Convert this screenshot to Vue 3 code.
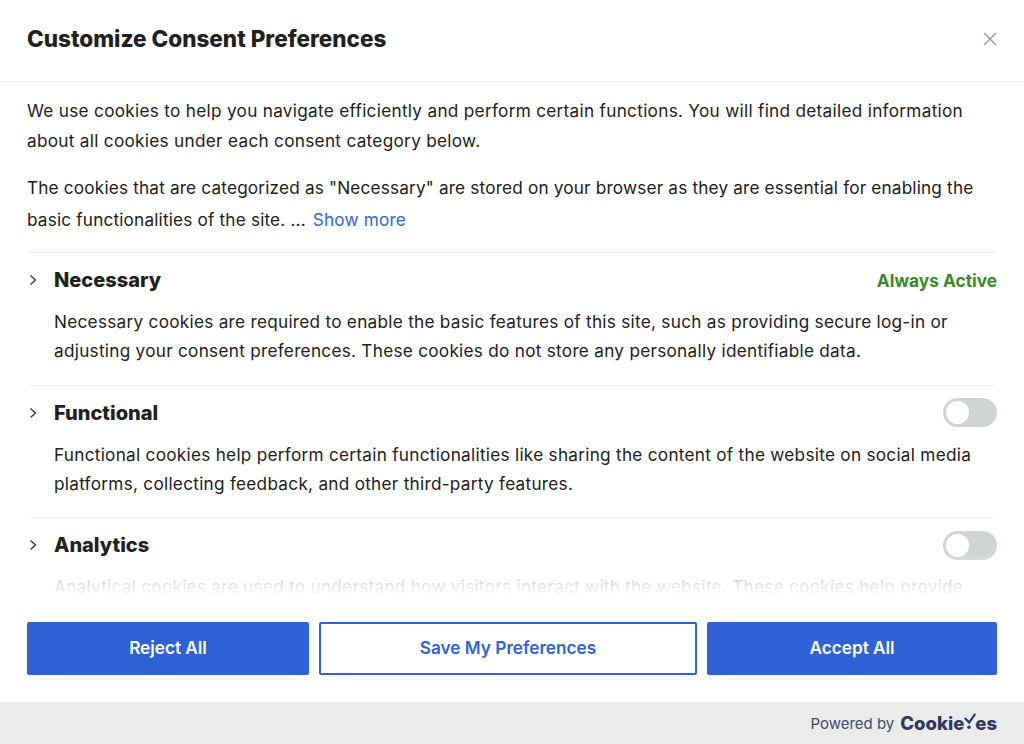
<script setup>
const items = [
  { name: 'Necessary', active: true, lines: ['Necessary cookies are required to enable the basic features of this site, such as providing secure log-in or', 'adjusting your consent preferences. These cookies do not store any personally identifiable data.'] },
  { name: 'Functional', active: false, lines: ['Functional cookies help perform certain functionalities like sharing the content of the website on social media', 'platforms, collecting feedback, and other third-party features.'] },
  { name: 'Analytics', active: false, lines: ['Analytical cookies are used to understand how visitors interact with the website. These cookies help provide'] },
]
</script>

<template>
  <div class="modal">
    <header class="head">
      <h1 class="title">Customize Consent Preferences</h1>
      <svg class="close" viewBox="0 0 14 14" aria-label="Close"><path d="M1 1L13 13M13 1L1 13" /></svg>
    </header>
    <main class="body">
      <div class="intro">
        <p class="para">We use cookies to help you navigate efficiently and perform certain functions. You will find detailed information<br>about all cookies under each consent category below.</p>
        <p class="para second">The cookies that are categorized as "Necessary" are stored on your browser as they are essential for enabling the<br>basic functionalities of the site. ... <a class="more">Show more</a></p>
      </div>
      <section v-for="item in items" :key="item.name" class="item">
        <div class="row">
          <svg class="chev" viewBox="0 0 8 12"><path d="M1.5 1.5L6.5 6L1.5 10.5" /></svg>
          <h2 class="name">{{ item.name }}</h2>
          <span v-if="item.active" class="active">Always Active</span>
          <span v-else class="toggle"><span class="knob"></span></span>
        </div>
        <p class="desc"><template v-for="(line, i) in item.lines" :key="i"><br v-if="i">{{ line }}</template></p>
      </section>
      <div class="fade"></div>
    </main>
    <div class="actions">
      <button class="btn solid reject">Reject All</button>
      <button class="btn outline save">Save My Preferences</button>
      <button class="btn solid accept">Accept All</button>
    </div>
    <footer class="foot">
      <span class="powered">Powered by</span>
      <span class="logo">Cookie<svg class="yes" viewBox="0 0 12 17"><path class="tick" d="M0.8 5L5.2 9.6L11.2 0.8" /><circle cx="5" cy="14.2" r="1.8" /></svg>es</span>
    </footer>
  </div>
</template>

<style>
html, body { margin: 0; background: #fff; }
</style>

<style scoped>
.modal {
  width: 1024px;
  height: 744px;
  display: flex;
  flex-direction: column;
  overflow: hidden;
  background: #fff;
  font-family: Inter, "Open Sans", sans-serif;
  color: #212121;
}
.head {
  box-sizing: border-box;
  height: 82px;
  flex: none;
  padding: 0 27px;
  display: flex;
  align-items: center;
  justify-content: space-between;
  border-bottom: 1px solid #f0f0f0;
}
.title {
  margin: -4px 0 0;
  font-size: 22.5px;
  font-weight: 800;
}
.close {
  width: 14px;
  height: 14px;
  margin-top: -4px;
  fill: none;
  stroke: #8a93a6;
  stroke-width: 1.3;
}
.body {
  flex: 1;
  min-height: 0;
  position: relative;
  overflow: hidden;
  padding: 0 27px;
}
.intro { padding: 14px 0 16px; border-bottom: 1px solid #f0f0f0; }
.para {
  margin: 0;
  font-size: 17.2px;
  letter-spacing: 0.29px;
  line-height: 30px;
  color: #212121;
  white-space: nowrap;
}
.second { margin-top: 16px; line-height: 32px; letter-spacing: 0.175px; }
.more { color: #2f66d9; margin-left: 2px; }
.item {
  box-sizing: border-box;
  height: 132.5px;
  border-bottom: 1px solid #f0f0f0;
}
.item:last-of-type { border-bottom: 0; }
.row {
  display: flex;
  align-items: center;
  height: 28px;
  padding-top: 13px;
}
.chev {
  width: 8px;
  height: 12px;
  margin-left: 2px;
  margin-right: 17px;
  fill: none;
  stroke: #333;
  stroke-width: 1.3;
}
.name {
  margin: 0;
  flex: 1;
  font-size: 20px;
  font-weight: 800;
  color: #212121;
}
.active {
  font-size: 17.3px;
  font-weight: 700;
  color: #3a8a28;
}
.toggle {
  box-sizing: border-box;
  width: 54px;
  height: 29px;
  border-radius: 15px;
  background: #d0d5d2;
  padding: 3px;
  display: block;
}
.knob {
  display: block;
  width: 23px;
  height: 23px;
  border-radius: 50%;
  background: #fff;
}
.desc {
  margin: 13px 0 0 27px;
  font-size: 17.2px;
  letter-spacing: 0.27px;
  line-height: 29px;
  white-space: nowrap;
  color: #212121;
}
.fade {
  position: absolute;
  left: 0;
  right: 0;
  bottom: 0;
  height: 42px;
  background: linear-gradient(to bottom, rgba(255,255,255,0), rgba(255,255,255,0.8) 60%, #fff);
}
.actions {
  flex: none;
  display: flex;
  gap: 10px;
  padding: 26px 27px 27px;
}
.btn {
  box-sizing: border-box;
  height: 53px;
  border-radius: 2px;
  font-family: inherit;
  font-size: 17.2px;
  font-weight: 600;
  padding: 0 0 3px;
}
.solid { background: #2f62d6; border: 2px solid #2f62d6; color: #fff; }
.outline { background: #fff; border: 2px solid #2f62d6; color: #2f62d6; }
.reject { width: 282px; }
.save { width: 378px; }
.accept { width: 290px; }
.foot {
  box-sizing: border-box;
  flex: none;
  height: 42px;
  background: #ebebeb;
  padding: 0 27px;
  display: flex;
  align-items: center;
  justify-content: flex-end;
  gap: 6px;
}
.powered { font-size: 15px; color: #3d4a6b; }
.logo {
  display: inline-flex;
  align-items: center;
  font-size: 18.5px;
  font-weight: 800;
  color: #2c3a5e;
}
.yes {
  width: 12px;
  height: 17px;
  margin: -3px -1px 0 0;
  fill: #2c3a5e;
}
.tick {
  fill: none;
  stroke: #2c3a5e;
  stroke-width: 2.2;
}
</style>
